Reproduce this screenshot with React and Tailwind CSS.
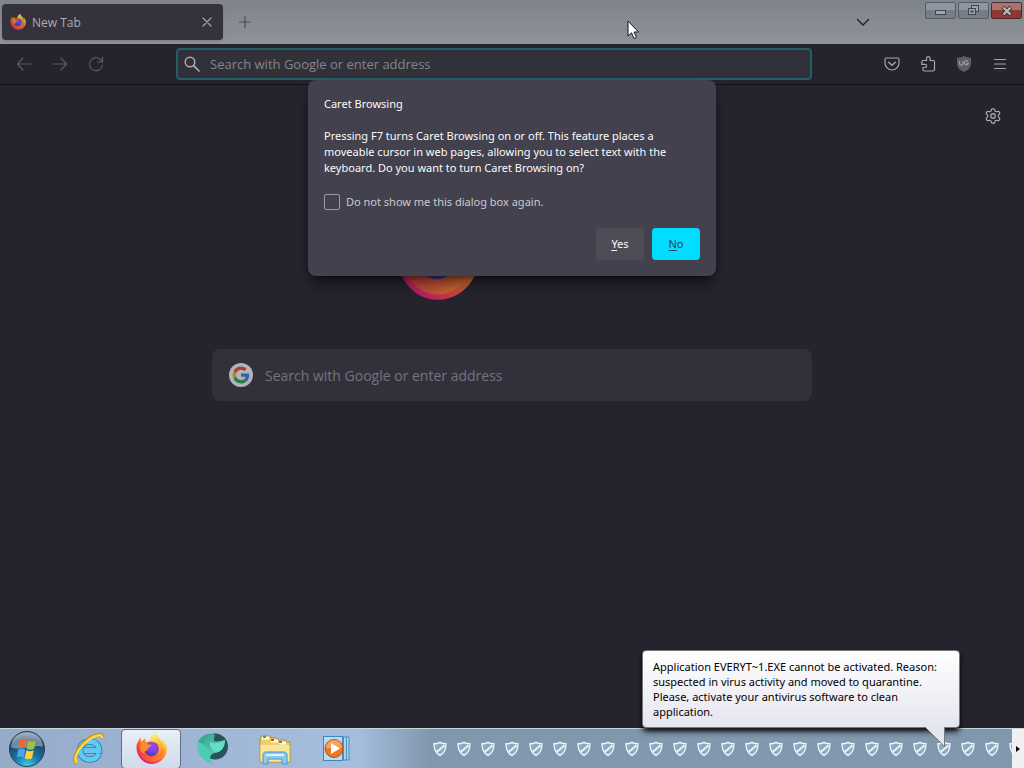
import { useId } from "react";
import { Settings } from "lucide-react";

const TRAY_ICONS = Array.from({ length: 24 }, (_, i) => i);

function FirefoxLogo({ className }) {
  const id = useId();
  return (
    <svg viewBox="0 0 32 32" className={className} aria-hidden="true">
      <defs>
        <linearGradient id={id + "a"} x1="0.85" y1="0.1" x2="0.2" y2="0.95">
          <stop offset="0" stopColor="#fff44f" />
          <stop offset="0.3" stopColor="#ffb02e" />
          <stop offset="0.58" stopColor="#ff6a35" />
          <stop offset="0.8" stopColor="#fa3252" />
          <stop offset="1" stopColor="#e0168b" />
        </linearGradient>
        <radialGradient id={id + "b"} cx="0.6" cy="0.3" r="0.8">
          <stop offset="0" stopColor="#a345f5" />
          <stop offset="0.6" stopColor="#6b45dc" />
          <stop offset="1" stopColor="#3f2a9c" />
        </radialGradient>
        <linearGradient id={id + "c"} x1="0.4" y1="0" x2="0.6" y2="1">
          <stop offset="0" stopColor="#fff36b" />
          <stop offset="0.5" stopColor="#ffc23a" />
          <stop offset="1" stopColor="#ff8a35" />
        </linearGradient>
        <linearGradient id={id + "d"} x1="0" y1="0.3" x2="1" y2="0.7">
          <stop offset="0" stopColor="#f0344c" />
          <stop offset="0.6" stopColor="#f4603a" />
          <stop offset="1" stopColor="#ff8a2e" />
        </linearGradient>
      </defs>
      <path
        fill={`url(#${id}a)`}
        d="M30.2 11c-.7-1.8-2.200-3.700-3.400-4.300 1 1.900 1.500 3.800 1.700 5.200C26.600 7.100 23.300 5.200 20.600 1c-.2-.3-.4-.6-.5-1-4 2.300-5.300 6.100-5.300 8.200-1.500.1-3 .6-4.200 1.400C9.800 9 9.500 7.500 9.800 5.700 8 6.600 6.600 7.900 5.600 9.100c-.8-.9-.7-3.900-.7-4.500C3.500 5.800 1.100 9.400.5 13.300-.2 22.700 6.600 31.800 16 31.900c7.800.1 14.700-5.700 15.800-13.400.3-2.700 0-5.200-1.600-7.500z"
      />
      <path
        fill={`url(#${id}d)`}
        d="M2.200 14c-.6 8 5.800 15.400 13.300 15.800 7 .4 13.200-4.800 13.400-11.800l-4-8-20 0z"
      />
      <circle cx="16" cy="16.600" r="7.300" fill={`url(#${id}b)`} />
      <path
        fill={`url(#${id}c)`}
        d="M20.100 0c-4 2.300-5.300 6.100-5.300 8.200 3.600-.2 6.800 1.400 8.300 4.400 1.600 3.600.7 7.600-1.900 9.800 5.100-1 7.300-5.500 6.300-10C26 7.800 22.300 4.300 20.100 0z"
      />
      <path
        fill="#ff8a2e"
        d="M5.600 9.100c3.100-.6 5.900.4 7.300 2.700 1.100.2 3.300.1 3.500.4-.2 1-1.500 1.900-2.700 2.400-1.300.8-2 2-1.600 3.400-2.600-.3-4.200 1.700-2.900 4.200-2.900-1.600-5.900-4.800-5.700-8.500z"
      />
    </svg>
  );
}

function GoogleMark() {
  return (
    <svg viewBox="0 0 24 24" className="size-6 shrink-0" aria-hidden="true">
      <circle cx="12" cy="12" r="12" fill="#b4b4b8" />
      <g transform="translate(3.500 3.500) scale(.354)">
        <path fill="#a84039" d="M24 9.500c3.540 0 6.710 1.220 9.210 3.600l6.850-6.850C35.900 2.380 30.470 0 24 0 14.620 0 6.510 5.380 2.560 13.220l7.980 6.190C12.430 13.720 17.740 9.500 24 9.500z" />
        <path fill="#3562a5" d="M46.980 24.550c0-1.570-.15-3.090-.38-4.550H24v9.020h12.940c-.58 2.960-2.260 5.480-4.780 7.180l7.730 6c4.510-4.180 7.090-10.360 7.090-17.650z" />
        <path fill="#b08b18" d="M10.530 28.590c-.48-1.450-.76-2.990-.76-4.590s.27-3.140.76-4.590l-7.980-6.190C.92 16.460 0 20.120 0 24c0 3.880.92 7.540 2.560 10.780l7.970-6.190z" />
        <path fill="#2d7a45" d="M24 48c6.480 0 11.930-2.130 15.890-5.810l-7.730-6c-2.150 1.450-4.920 2.300-8.160 2.300-6.260 0-11.570-4.220-13.470-9.910l-7.980 6.190C6.510 42.620 14.620 48 24 48z" />
      </g>
    </svg>
  );
}

function Glyph({ children, className = "size-4" }) {
  return (
    <svg viewBox="0 0 16 16" className={className} fill="none" stroke="currentColor" strokeWidth="1.200" strokeLinecap="round" strokeLinejoin="round" aria-hidden="true">
      {children}
    </svg>
  );
}

function ToolButton({ label, children, className = "text-[#a5a5ab]" }) {
  return (
    <button type="button" aria-label={label} className={`flex h-8 w-9 items-center justify-center ${className}`}>
      {children}
    </button>
  );
}

function TabBar() {
  return (
    <header className="flex h-11 items-start bg-linear-to-b from-[#7f848d] to-[#8f9297]">
      <div className="mt-1 ml-0.5 flex h-9 w-[221px] items-center rounded bg-[#33323d] pr-2 pl-2 shadow-sm">
        <FirefoxLogo className="size-4 opacity-75" />
        <span className="ml-1.5 flex-1 pt-0.5 text-xs text-[#adadb3]">New Tab</span>
        <button type="button" aria-label="Close tab" className="flex size-4 items-center justify-center text-[#a4a4aa]">
          <Glyph><path d="M4 4l8 8M12 4l-8 8" /></Glyph>
        </button>
      </div>
      <button type="button" aria-label="Open a new tab" className="mt-1.5 ml-2 flex h-8 w-7 items-center justify-center text-[#4a4c55]">
        <Glyph><path d="M8 2.500v11M2.500 8h11" /></Glyph>
      </button>
      <button type="button" aria-label="List all tabs" className="mt-1.5 mr-11 ml-auto flex h-8 w-9 items-center justify-center text-[#20222b]">
        <Glyph><path strokeWidth="1.400" d="M2.500 5.500L8 11l5.500-5.500" /></Glyph>
      </button>
      <div className="mt-0.5 mr-0.5 flex gap-0.5">
        <button type="button" aria-label="Minimize" className="flex h-[17px] w-[31px] items-center justify-center rounded-xs border border-[#555c66] bg-linear-to-b from-[#8f969e] from-50% to-[#737e89] to-50%">
          <svg viewBox="0 0 12 6" className="mt-1 h-1.5 w-3" aria-hidden="true"><rect x=".5" y=".5" width="10" height="4" fill="#a0a5ab" stroke="#3f4450" /></svg>
        </button>
        <button type="button" aria-label="Restore" className="flex h-[17px] w-[31px] items-center justify-center rounded-xs border border-[#555c66] bg-linear-to-b from-[#8f969e] from-50% to-[#737e89] to-50%">
          <svg viewBox="0 0 13 11" className="h-[11px] w-[13px]" fill="#a0a5ab" stroke="#3f4450" aria-hidden="true">
            <rect x="4.500" y=".5" width="7" height="6" /><rect x="1.500" y="3.500" width="7" height="6" /><rect x="4" y="6" width="2" height="1" />
          </svg>
        </button>
        <button type="button" aria-label="Close window" className="flex h-[17px] w-[31px] items-center justify-center rounded-xs border border-[#4c2a2e] bg-linear-to-b from-[#a9746e] from-50% to-[#8d3830] to-50%">
          <svg viewBox="0 0 12 10" className="h-2.5 w-3" fill="none" aria-hidden="true">
            <path d="M2 1l8 8M10 1L2 9" stroke="#4a3338" strokeWidth="4" /><path d="M2.500 1.500l7 7M9.500 1.500l-7 7" stroke="#bdb9b9" strokeWidth="2.200" />
          </svg>
        </button>
      </div>
    </header>
  );
}

function Toolbar() {
  return (
    <nav className="flex h-[41px] items-center border-b border-[#111116] bg-[#25242e] px-1.5">
      <ToolButton label="Back" className="text-[#5b5b64]"><Glyph><path d="M15 8H1.500M7 2L1.500 8 7 14" /></Glyph></ToolButton>
      <ToolButton label="Forward" className="text-[#5b5b64]"><Glyph><path d="M1 8h13.500M9 2l5.500 6L9 14" /></Glyph></ToolButton>
      <ToolButton label="Reload" className="text-[#5b5b64]"><Glyph><path d="M14 5.500A6.500 6.500 0 1 0 14.500 9M14.500 1v5h-5" /></Glyph></ToolButton>
      <div className="mx-[62px] flex h-8 min-w-0 flex-1 items-center rounded border-2 border-[#245e69] bg-[#32313a] pl-1.5 text-[#aaaab0]">
        <Glyph><circle cx="6" cy="6" r="4.800" strokeWidth="1.500" /><path strokeWidth="1.700" d="M9.700 9.700L15 15" /></Glyph>
        <input aria-label="Search with Google or enter address" placeholder="Search with Google or enter address" className="ml-2.5 min-w-0 flex-1 bg-transparent pt-0.5 text-[13px] outline-none placeholder:text-[#84848b]" />
      </div>
      <ToolButton label="Save to Pocket">
        <Glyph><path d="M2.500 2h11A1.500 1.500 0 0 1 15 3.500V7A7 7 0 0 1 1 7V3.500A1.500 1.500 0 0 1 2.500 2z" /><path strokeWidth="1.400" d="M4.700 6.200L8 9.300l3.300-3.100" /></Glyph>
      </ToolButton>
      <ToolButton label="Extensions">
        <Glyph><path d="M6.500 4.500V2.400a1.800 1.800 0 0 1 3.600 0v2.100h3A1.400 1.400 0 0 1 14.500 6v7.500a1.500 1.500 0 0 1-1.500 1.500H4.500A1.500 1.500 0 0 1 3 13.500v-2h2a1.600 1.600 0 0 0 0-3.200H1.800V6A1.500 1.500 0 0 1 3.300 4.500z" /></Glyph>
      </ToolButton>
      <ToolButton label="uBlock Origin">
        <svg viewBox="0 0 16 16" className="size-4" aria-hidden="true">
          <path fill="#5d5d64" d="M8 0c2 1.300 4 1.700 7 1.700V7c0 4.500-2.500 7.200-7 9-4.500-1.800-7-4.500-7-9V1.700C4 1.700 6 1.300 8 0z" />
          <path fill="none" stroke="#a0a0a5" strokeWidth="1.100" d="M3.500 5v2.500a1.700 1.700 0 0 0 3.400 0V5M12 5.800A2 2 0 1 0 12.200 7.500H10.600" />
        </svg>
      </ToolButton>
      <ToolButton label="Open application menu"><Glyph><path d="M2.500 3.500h11M2.500 8h11M2.500 12.500h11" /></Glyph></ToolButton>
    </nav>
  );
}

function CaretDialog() {
  return (
    <section role="dialog" aria-labelledby="caret-title" className="absolute -top-[5px] left-1/2 w-[408px] -translate-x-1/2 rounded-lg bg-[#42414d] p-4 font-['Noto_Sans',sans-serif] text-[11px]/4 text-[#fbfbfe] shadow-lg shadow-black/50">
      <h1 id="caret-title">Caret Browsing</h1>
      <p className="mt-4">
        Pressing F7 turns Caret Browsing on or off. This feature places a<br />
        moveable cursor in web pages, allowing you to select text with the<br />
        keyboard. Do you want to turn Caret Browsing on?
      </p>
      <label className="mt-[18px] flex items-center gap-1.5 text-[#c9c9cf]">
        <input type="checkbox" className="size-4 appearance-none rounded-xs border border-[#9b9ba3]" />
        Do not show me this dialog box again.
      </label>
      <div className="mt-[18px] flex justify-end gap-2">
        <button type="button" className="h-8 w-12 rounded bg-[#4e4d57]"><u className="underline-offset-2">Y</u>es</button>
        <button type="button" className="h-8 w-12 rounded bg-[#00ddff] text-[#23404f]"><u className="underline-offset-2">N</u>o</button>
      </div>
    </section>
  );
}

function NewTabPage() {
  return (
    <main className="relative flex flex-1 flex-col items-center bg-[#25232e] px-4">
      <button type="button" aria-label="Personalize new tab" className="absolute top-[22px] right-[22px] text-[#a5a5ab]">
        <Settings className="size-[18px]" strokeWidth={1.700} />
      </button>
      <div className="mt-[133px] w-[232px]"><FirefoxLogo className="size-[82px] opacity-75" /></div>
      <div className="mt-[49px] flex h-[52px] w-full max-w-[600px] items-center rounded-lg bg-[#32313b] px-[17px]">
        <GoogleMark />
        <input aria-label="Search the web" placeholder="Search with Google or enter address" className="ml-3 min-w-0 flex-1 bg-transparent pt-0.5 text-sm outline-none placeholder:text-[#73737b]" />
      </div>
      <CaretDialog />
    </main>
  );
}

function WindowsOrb() {
  return (
    <svg viewBox="0 0 38 38" className="size-[38px]" aria-hidden="true">
      <defs>
        <radialGradient id="orb" cx=".5" cy="1" r="1">
          <stop offset="0" stopColor="#3cd6ee" /><stop offset=".4" stopColor="#17719f" /><stop offset=".75" stopColor="#204868" /><stop offset="1" stopColor="#8095a8" />
        </radialGradient>
      </defs>
      <circle cx="19" cy="19" r="17.500" fill="url(#orb)" stroke="#233e57" />
      <path d="M3 17C4 7 11 2.500 19 2.500S34 7 35 17C27 13 12 22 3 17z" fill="#fff" opacity=".35" />
      <path d="M12 10c2.500-1.500 5-1.500 7 0l-1.500 8c-2-1.300-4.500-1.300-7 0z" fill="#ee6536" />
      <path d="M20.200 10.700c2.300 1.300 5 1.300 7.500 0l-1.700 8c-2.300 1.300-5 1.300-7.300 0z" fill="#9ac63e" />
      <path d="M10.200 19.500c2.500-1.400 5-1.400 7 0l-1.500 8c-2-1.300-4.500-1.300-7 0z" fill="#46a8e6" />
      <path d="M18.400 20.200c2.300 1.400 5 1.400 7.300 0l-1.700 8c-2.300 1.300-5 1.300-7.300 0z" fill="#ffd03f" />
    </svg>
  );
}

function ExplorerE() {
  return (
    <svg viewBox="0 0 32 32" className="size-8" fill="none" aria-hidden="true">
      <path d="M26 20.500c-1.700 4.300-5.200 6-9.300 6-5.700 0-9.700-4-9.700-9.300C7 12 11.200 8.500 16.700 8.500c5.800 0 9.500 4 9.300 9H11" stroke="#2080bb" strokeWidth="6.500" />
      <path d="M26 20.500c-1.700 4.300-5.200 6-9.300 6-5.700 0-9.700-4-9.700-9.300C7 12 11.200 8.500 16.700 8.500c5.800 0 9.500 4 9.300 9H11" stroke="#62caf2" strokeWidth="4.800" />
      <path d="M4 30C-1 28 3 17 12 9S30-1 30 5" stroke="#c99416" strokeWidth="3.500" />
      <path d="M4 29.500C0 27 4 17 12.500 9.500S29 0 29.500 5" stroke="#ffdb4e" strokeWidth="2.200" />
    </svg>
  );
}

function TealSphere() {
  return (
    <svg viewBox="0 0 34 32" className="h-8 w-[34px]" aria-hidden="true">
      <defs><linearGradient id="teal" x1="0" y1="0" x2="1" y2="1"><stop offset="0" stopColor="#2d9c86" /><stop offset="1" stopColor="#6ce8c8" /></linearGradient></defs>
      <circle cx="19" cy="13.500" r="13" fill="#27545b" />
      <path d="M2 8C7 1 14-1 19 2c-1 2-1 4-1 6 3 1 6 0 11-1-1 8-4 13-11 13-4 2-5 5-3 9-7-2-12-9-12-20z" fill="url(#teal)" />
      <path d="M1.500 9c5 1 9 4 12 9-1 3-1 6 3 13C6 28 0 20 1.500 9z" fill="#4bcdb0" />
      <path d="M14 9c4 2 10 2 15-2 0 8-4 12-10 12-3-2-5-5-5-10z" fill="#64dfc4" />
    </svg>
  );
}

function FolderIcon() {
  return (
    <svg viewBox="0 0 34 32" className="h-8 w-[34px]" aria-hidden="true">
      <path d="M2 5.500L4 3h8l1 2h6l1 2h7l1 2h4v20H2z" fill="#f0cf69" stroke="#b98f33" />
      <path d="M4 5h7M13 8h7M21 10h7" stroke="#fffbe2" strokeWidth="3" />
      <path d="M5 4h3" stroke="#39ab49" strokeWidth="2" /><path d="M13 7h3" stroke="#d14c37" strokeWidth="2" /><path d="M21 9h3" stroke="#3a7fd0" strokeWidth="2" />
      <path d="M2.500 12h29v16.500h-29z" fill="#f8e69b" />
      <path d="M5 31V22c0-2 1-3 3-3h18c2 0 3 1 3 3v9h-5v-5H10v5z" fill="#8bcbed" stroke="#4d94c5" />
      <path d="M8 22h18" stroke="#d7f2ff" strokeWidth="2" />
    </svg>
  );
}

function MediaPlayer() {
  return (
    <svg viewBox="0 0 30 28" className="h-7 w-[30px]" aria-hidden="true">
      <path d="M15 2h12v23H15z" fill="#a8d4ee" stroke="#4f8fbd" /><path d="M21.500 2v23M24.500 2v23" stroke="#4f8fbd" />
      <rect x="1.500" y="1.500" width="19" height="24" fill="#b9dcf3" stroke="#4585b5" />
      <circle cx="12" cy="13.500" r="9" fill="#ee7623" stroke="#b95217" /><path d="M4 13a8 8 0 0 1 16 0z" fill="#f6a361" />
      <path d="M9 8l9 5.500L9 19z" fill="#fff" />
    </svg>
  );
}

function Shield() {
  return (
    <svg viewBox="0 0 16 16" className="size-4 shrink-0" aria-hidden="true">
      <path d="M8 1.500c2 1 3.700 1.300 6 1.300 0 5.500-1 9.200-6 11.700C3 12 2 8.300 2 2.800c2.300 0 4-.3 6-1.300z" fill="#8fa9bd" stroke="#eaf5fb" strokeWidth="1.400" />
      <path d="M4 11.500L12.500 4.500" stroke="#eaf5fb" strokeWidth="1.800" />
    </svg>
  );
}

function Taskbar() {
  const item = "flex h-10 items-center justify-center";
  return (
    <footer className="relative flex h-10 items-center border-t border-[#c7d6dd] bg-linear-to-r from-[#96abc8] via-[#a6bedd] via-35% to-[#8197ae] to-42%">
      <button type="button" aria-label="Start" className={`${item} w-[54px]`}><WindowsOrb /></button>
      <button type="button" aria-label="Internet Explorer" className={`${item} ml-1 w-[62px]`}><ExplorerE /></button>
      <button type="button" aria-label="Firefox" className={`${item} ml-px w-[60px] rounded border border-[#5d718a] bg-linear-to-b from-[#e8eff7] to-[#d0dceb]`}><FirefoxLogo className="size-[31px]" /></button>
      <button type="button" aria-label="Web browser" className={`${item} ml-0.5 w-[60px]`}><TealSphere /></button>
      <button type="button" aria-label="File Explorer" className={`${item} ml-0.5 w-[60px]`}><FolderIcon /></button>
      <button type="button" aria-label="Media Player" className={`${item} ml-0.5 w-[60px]`}><MediaPlayer /></button>
      <div className="ml-auto flex gap-2 overflow-hidden">
        {TRAY_ICONS.map((n) => <Shield key={n} />)}
        <div className="w-1 overflow-hidden"><Shield /></div>
      </div>
      <button type="button" aria-label="Scroll tray" className="flex h-10 w-3 items-center justify-center bg-[#f0f0f0]">
        <svg viewBox="0 0 4 6" className="h-1.5 w-1" aria-hidden="true"><path d="M0 0l4 3-4 3z" fill="#000" /></svg>
      </button>
      <aside role="status" className="absolute right-16 bottom-10 w-[318px] rounded border border-[#777] bg-linear-to-b from-white to-[#e5e5f0] px-2.5 pt-2 pb-2 font-['Noto_Sans',sans-serif] text-[11px]/[15px] text-black shadow-md shadow-black">
        Application EVERYT~1.EXE cannot be activated. Reason:<br />
        suspected in virus activity and moved to quarantine.<br />
        Please, activate your antivirus software to clean<br />
        application.
        <svg viewBox="0 0 20 20" className="absolute top-full right-3.5 size-5" aria-hidden="true"><path d="M0 0h20v20z" fill="#e5e5f0" /><path d="M0 0l19.500 19.500V0" fill="none" stroke="#777" /></svg>
      </aside>
    </footer>
  );
}

export default function App() {
  return (
    <div className="relative flex min-h-screen flex-col overflow-hidden font-['Open_Sans','Noto_Sans',sans-serif]">
      <TabBar />
      <Toolbar />
      <NewTabPage />
      <Taskbar />
      <svg viewBox="0 0 12 20" className="absolute top-5 left-[627px] h-5 w-3" aria-hidden="true">
        <path d="M1 1v15l3.500-3.200L7 18.500l2.500-1.100L7 12h4.500z" fill="#fff" stroke="#15151d" />
      </svg>
    </div>
  );
}
